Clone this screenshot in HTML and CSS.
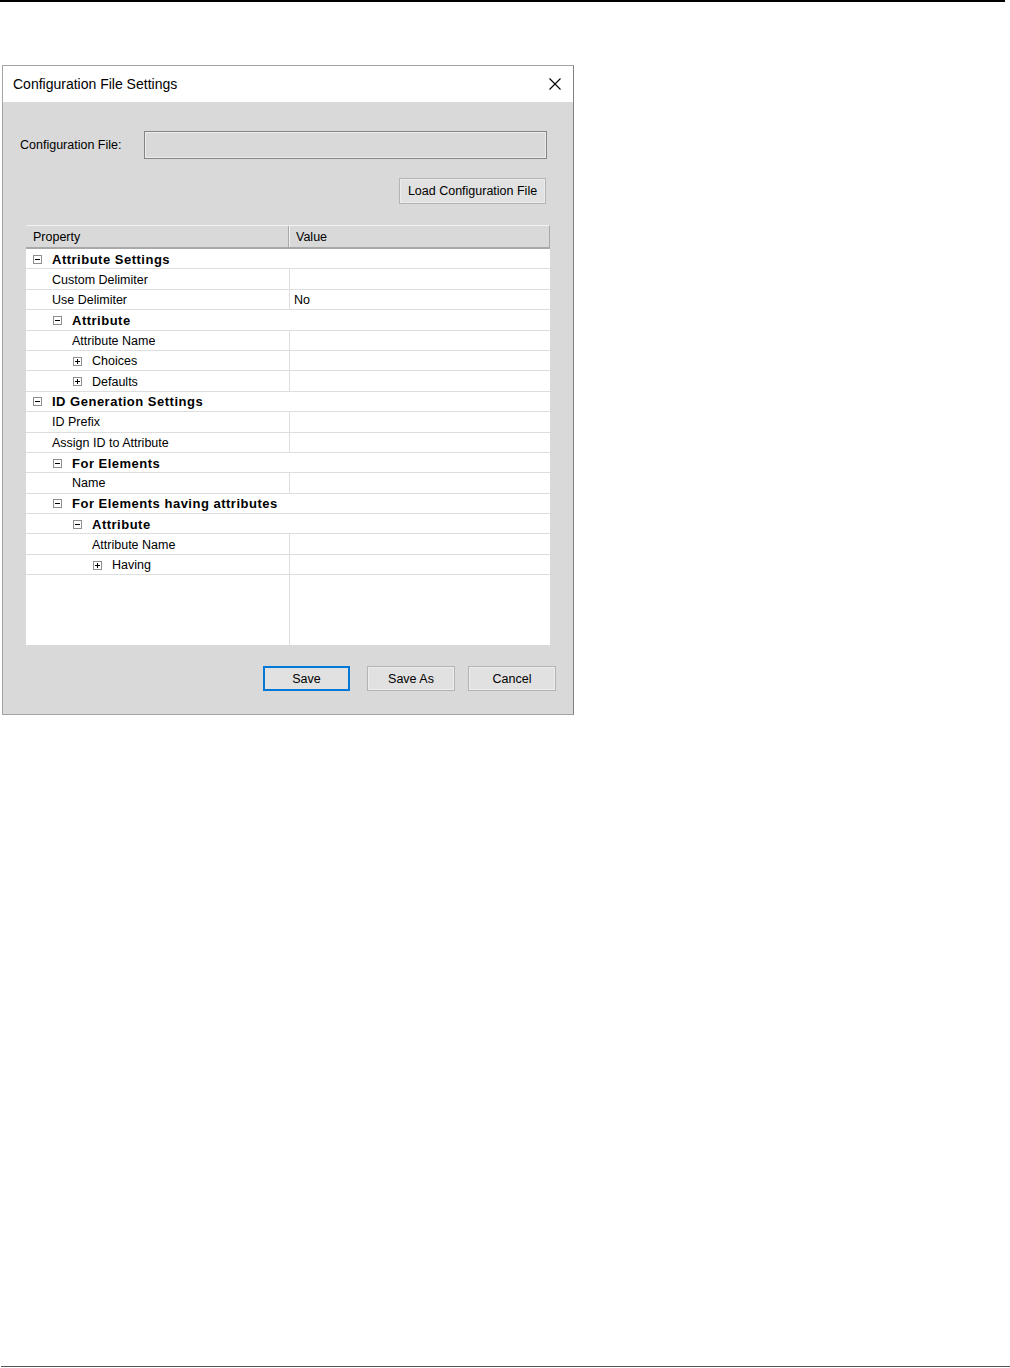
FILE: index.html
```html
<!DOCTYPE html>
<html lang="en">
<head>
  <meta charset="UTF-8">
  <title>Configuration File Settings</title>
  <link rel="stylesheet" href="styles.css">
</head>
<body>
  <div class="page">
    <div class="top-rule"></div>

    <div class="dialog">
      <div class="titlebar">
        <span>Configuration File Settings</span>
        <svg class="close" width="12" height="12" viewBox="0 0 12 12">
          <path d="M0.5 0.5 L11.5 11.5 M11.5 0.5 L0.5 11.5" stroke="#000" stroke-width="1.1" fill="none"/>
        </svg>
      </div>

      <div class="dialog-body">
        <div class="config-row">
          <label for="cfg">Configuration File:</label>
          <input type="text" id="cfg" class="textbox" disabled>
        </div>

        <div class="load-row">
          <button class="btn load">Load Configuration File</button>
        </div>

        <div class="grid">
          <div class="grid-head">
            <div class="prop">Property</div>
            <div class="val">Value</div>
          </div>

          <div class="row cat"><div class="prop l1"><span class="tog minus"></span>Attribute Settings</div></div>
          <div class="row"><div class="prop l1">Custom Delimiter</div><div class="val"></div></div>
          <div class="row"><div class="prop l1">Use Delimiter</div><div class="val">No</div></div>
          <div class="row cat"><div class="prop l2"><span class="tog minus"></span>Attribute</div></div>
          <div class="row"><div class="prop l2">Attribute Name</div><div class="val"></div></div>
          <div class="row"><div class="prop l3"><span class="tog plus"></span>Choices</div><div class="val"></div></div>
          <div class="row"><div class="prop l3"><span class="tog plus"></span>Defaults</div><div class="val"></div></div>
          <div class="row cat"><div class="prop l1"><span class="tog minus"></span>ID Generation Settings</div></div>
          <div class="row"><div class="prop l1">ID Prefix</div><div class="val"></div></div>
          <div class="row"><div class="prop l1">Assign ID to Attribute</div><div class="val"></div></div>
          <div class="row cat"><div class="prop l2"><span class="tog minus"></span>For Elements</div></div>
          <div class="row"><div class="prop l2">Name</div><div class="val"></div></div>
          <div class="row cat"><div class="prop l2"><span class="tog minus"></span>For Elements having attributes</div></div>
          <div class="row cat"><div class="prop l3"><span class="tog minus"></span>Attribute</div></div>
          <div class="row"><div class="prop l3">Attribute Name</div><div class="val"></div></div>
          <div class="row"><div class="prop l4"><span class="tog plus"></span>Having</div><div class="val"></div></div>

          <div class="grid-fill">
            <div class="prop"></div>
            <div class="val"></div>
          </div>
        </div>

        <div class="actions">
          <button class="btn primary">Save</button>
          <button class="btn save-as">Save As</button>
          <button class="btn cancel">Cancel</button>
        </div>
      </div>
    </div>

    <div class="spacer"></div>
    <div class="bottom-rule"></div>
  </div>
</body>
</html>
```

FILE: styles.css
```css
body {
  margin: 0;
  background: #fff;
  font-family: "Liberation Sans", Arial, sans-serif;
  font-size: 12.5px;
  color: #000;
}
.page {
  display: flex;
  flex-direction: column;
  width: 1010px;
  height: 1368px;
}
.top-rule {
  height: 2px;
  width: 1005px;
  background: #000;
}
.spacer {
  flex: 1;
}
.bottom-rule {
  height: 1px;
  margin: 0 0 1px 1px;
  background: #555;
}

.dialog {
  margin: 63px 0 0 2px;
  width: 570px;
  height: 648px;
  border: 1px solid #a3a3a3;
  border-right-color: #808080;
  background: #d9d9d9;
  display: flex;
  flex-direction: column;
}
.titlebar {
  height: 36px;
  background: #fff;
  display: flex;
  align-items: center;
  justify-content: space-between;
  padding: 0 12px 0 10px;
  font-size: 14px;
}
.dialog-body {
  flex: 1;
  display: flex;
  flex-direction: column;
  padding-top: 29px;
}

.config-row {
  display: flex;
  align-items: center;
  height: 28px;
  padding-left: 17px;
}
.config-row label {
  width: 124px;
}
.textbox {
  box-sizing: border-box;
  width: 403px;
  height: 28px;
  margin: 0;
  background: #d9d9d9;
  border: 1px solid #848484;
  box-shadow: inset 0 0 0 1px #ececec;
}

.load-row {
  display: flex;
  justify-content: flex-end;
  margin-top: 19px;
  padding-right: 27px;
}

.btn {
  box-sizing: border-box;
  height: 25px;
  margin: 0;
  padding: 0;
  background: #e1e1e1;
  border: 1px solid #b4b4b4;
  box-shadow: inset 0 0 0 1px #ececec;
  font-family: inherit;
  font-size: 12.5px;
  color: #000;
}
.btn.load {
  width: 147px;
  height: 26px;
}

.grid {
  margin: 21px 0 0 23px;
  width: 524px;
  height: 420px;
  background: #fff;
  display: flex;
  flex-direction: column;
}
.grid-head {
  box-sizing: border-box;
  height: 24px;
  display: flex;
  background: #d9d9d9;
  border-top: 1px solid #f2f2f2;
  border-bottom: 2px solid #a8a8a8;
  border-right: 1px solid #a8a8a8;
}
.grid-head .prop {
  box-sizing: border-box;
  width: 263px;
  padding: 1px 0 0 7px;
  border-right: 1px solid #a8a8a8;
  display: flex;
  align-items: center;
}
.grid-head .val {
  flex: 1;
  padding: 1px 0 0 6px;
  border-left: 1px solid #f2f2f2;
  display: flex;
  align-items: center;
}

.row {
  box-sizing: border-box;
  height: 20.4px;
  display: flex;
  border-bottom: 1px solid #dedede;
}
.row .prop {
  box-sizing: border-box;
  width: 263px;
  padding-top: 1px;
  display: flex;
  align-items: center;
  white-space: nowrap;
}
.row .val {
  flex: 1;
  padding: 1px 0 0 4px;
  border-left: 1px solid #dedede;
  display: flex;
  align-items: center;
}
.row.cat .prop {
  width: auto;
  flex: 1;
  font-size: 13px;
  font-weight: bold;
  letter-spacing: 0.5px;
}
.l1 { padding-left: 26px; }
.l2 { padding-left: 46px; }
.l3 { padding-left: 66px; }
.l4 { padding-left: 86px; }

.tog {
  box-sizing: border-box;
  position: relative;
  width: 9px;
  height: 9px;
  margin: 0 10px 0 -19px;
  border: 1px solid #8e8e8e;
  background: #fff;
  flex: none;
}
.tog::before {
  content: "";
  position: absolute;
  left: 1px;
  top: 3px;
  width: 5px;
  height: 1px;
  background: #000;
}
.tog.plus::after {
  content: "";
  position: absolute;
  left: 3px;
  top: 1px;
  width: 1px;
  height: 5px;
  background: #000;
}

.grid-fill {
  flex: 1;
  display: flex;
}
.grid-fill .prop {
  width: 263px;
}
.grid-fill .val {
  flex: 1;
  border-left: 1px solid #dedede;
}

.actions {
  display: flex;
  justify-content: flex-end;
  margin-top: 21px;
  padding-right: 17px;
}
.btn.primary {
  width: 87px;
  border: 1px solid #0078d7;
  box-shadow: inset 0 0 0 1px #0078d7;
}
.btn.save-as {
  width: 88px;
  margin-left: 17px;
}
.btn.cancel {
  width: 88px;
  margin-left: 13px;
}
```
